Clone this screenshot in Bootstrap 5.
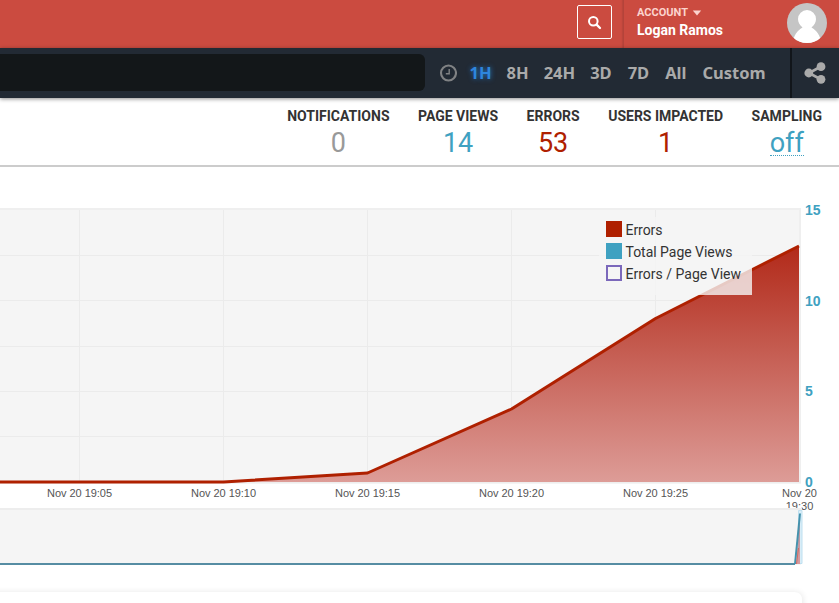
<!DOCTYPE html>
<html lang="en">
<head>
<meta charset="utf-8">
<title>Errors dashboard</title>
<meta name="viewport" content="width=device-width, initial-scale=1">
<link rel="stylesheet" href="https://cdn.jsdelivr.net/npm/bootstrap@5.3.0/dist/css/bootstrap.min.css">
<style>
body{font-family:Roboto,sans-serif;color:#333;background:#fff;overflow:hidden;height:603px}
.topbar{height:48px;background:#cb4b40;color:#fff}
.search-btn{width:35px;height:34px;border:1px solid #fff;border-radius:2px;margin:5px 11px 0 0;padding:0;color:#fff}
.account{width:216px;border-left:1px solid #b4433a;box-shadow:-1px 0 1px rgba(0,0,0,.08);padding:5px 12px 0 13px}
.account-title{font-size:11px;line-height:15px;font-weight:700;color:#fbd3cd}
.account-name{font-size:14px;line-height:20px;font-weight:700;letter-spacing:0}
.avatar{width:40px;height:40px;margin-top:-2px}
.toolbar{height:50px;background:#222a34;box-shadow:0 1px 4px rgba(0,0,0,.45);position:relative}
.filter-box{width:425px;height:37px;margin-top:6px;background:#131719;border-radius:0 6px 6px 0}
.ranges{margin-left:14px;font:700 16.5px/24px "Noto Sans",sans-serif;color:#aaa}
.ranges a{color:inherit;text-decoration:none;white-space:nowrap;margin-left:15px}
.ranges a.current{color:#2e86de;text-shadow:0 0 5px #2274c8;margin-left:12.5px}
.ranges a.spaced{margin-left:16px}
.share{width:49px;border-left:2px solid #11151a;padding-right:1px}
.stats{height:69px;padding:8px 17px 0 0;gap:28.5px;border-bottom:2px solid #ccc}
.stat-name{font-size:14px;line-height:20px;font-weight:700;white-space:nowrap}
.stat-num{font-size:27px;line-height:32px;padding-top:1px}
.c-gray{color:#999}.c-blue{color:#3fa1c1}.c-red{color:#af2000}
.off-link{border-bottom:1px dotted #3fa1c1;line-height:24px;display:inline-block}
.chart-area{height:436px}
.chart-area svg{display:block}
.axis-y{font:700 14px "Liberation Sans",Arial,sans-serif;fill:#3fa1c1}
.axis-x{font:11px "Liberation Sans",Arial,sans-serif;fill:#555;text-anchor:middle}
.key{font:14px Roboto,sans-serif;fill:#333}
</style>
</head>
<body>
<header class="topbar d-flex justify-content-end">
  <button class="btn search-btn d-flex align-items-center justify-content-center" aria-label="Search">
    <svg width="15" height="15" viewBox="0 0 15 15" fill="none" stroke="#fff"><circle cx="6.3" cy="6.3" r="4.3" stroke-width="2"/><path d="M9.6 9.6L13 13" stroke-width="2.3" stroke-linecap="round"/></svg>
  </button>
  <div class="account d-flex justify-content-between">
    <div>
      <div class="account-title d-flex align-items-center">ACCOUNT
        <svg class="ms-1" width="10" height="6" viewBox="0 0 10 6"><path d="M.8.5h8.4L5 5.500z" fill="#fbd3cd"/></svg></div>
      <div class="account-name">Logan Ramos</div>
    </div>
    <svg class="avatar" viewBox="0 0 40 40"><defs><clipPath id="face"><circle cx="20" cy="20" r="20"/></clipPath></defs><g clip-path="url(#face)"><path fill="#c5c5c5" d="M0 0h40v40H0z"/><path fill="#fff" d="M5.500 40C7 32 10 28 15.500 24.500 12.500 22 11 19 11 16a9 9 0 0 1 18 0c0 3-1.500 6-4.500 8.500C30 28 33 32 34.500 40z"/></g></svg>
  </div>
</header>
<nav class="toolbar d-flex">
  <div class="filter-box"></div>
  <div class="ranges d-flex align-items-center flex-grow-1">
    <svg width="18" height="18" viewBox="0 0 18 18" fill="none" stroke="#808284"><circle cx="9.500" cy="9" r="7.500" stroke-width="2.100"/><path d="M10.200 5v4.700H6.800" stroke-width="1.400"/></svg>
    <a class="current" href="#">1H</a>
    <a href="#">8H</a>
    <a href="#">24H</a>
    <a href="#">3D</a>
    <a class="spaced" href="#">7D</a>
    <a class="spaced" href="#">All</a>
    <a class="spaced" href="#">Custom</a>
  </div>
  <div class="share d-flex align-items-center justify-content-center">
    <svg width="22" height="22" viewBox="0 0 22 22" fill="#aaa"><path d="M17 4.500L5 11l12 6.500" fill="none" stroke="#aaa" stroke-width="2.600"/><circle cx="17" cy="4.700" r="4.400"/><circle cx="4.800" cy="11" r="4.400"/><circle cx="17" cy="17.300" r="4.400"/></svg>
  </div>
</nav>
<section class="stats d-flex justify-content-end text-center">
  <div><div class="stat-name">NOTIFICATIONS</div><div class="stat-num c-gray">0</div></div>
  <div><div class="stat-name">PAGE VIEWS</div><div class="stat-num c-blue">14</div></div>
  <div><div class="stat-name">ERRORS</div><div class="stat-num c-red">53</div></div>
  <div><div class="stat-name">USERS IMPACTED</div><div class="stat-num c-red">1</div></div>
  <div><div class="stat-name">SAMPLING</div><div class="stat-num c-blue"><span class="off-link">off</span></div></div>
</section>
<main class="chart-area">
<svg width="839" height="436" viewBox="0 167 839 436">
  <defs>
    <linearGradient id="fillRed" gradientUnits="userSpaceOnUse" x1="0" y1="209" x2="0" y2="482"><stop offset="0" stop-color="#af2000" stop-opacity="1"/><stop offset=".14" stop-color="#b22a1a"/><stop offset="1" stop-color="#dd9c97"/></linearGradient>
    <linearGradient id="fillMini" x1="0" y1="0" x2="0" y2="1"><stop offset="0" stop-color="#a99aaa"/><stop offset="1" stop-color="#d79b9f"/></linearGradient>
    <filter id="soft" x="-5%" y="-50%" width="110%" height="200%"><feGaussianBlur stdDeviation="3"/></filter>
  </defs>
  <path d="M0 208h801v275.500H0z" fill="#f5f5f5"/>
  <path d="M0 209h800v274" fill="none" stroke="#efefef" stroke-width="2"/>
  <path d="M0 482.500h801" stroke="#eee" stroke-width="2"/>
  <path d="M79.500 210v272M223.500 210v272M367.500 210v272M511.500 210v272M655.500 210v272M0 255.500h799M0 300.500h799M0 346.500h799M0 391.500h799M0 436.500h799" stroke="#ebebeb" stroke-width="1" fill="none"/>
  <path d="M0 482H223.500L367.500 473 511.500 409 655.500 318.500 799 246V482z" fill="url(#fillRed)"/>
  <path d="M0 482H223.500L367.500 473 511.500 409 655.500 318.500 799 246" fill="none" stroke="#af2000" stroke-width="3" stroke-linejoin="round"/>
  <path d="M599 217h153v78H599z" fill="#f5f5f5" fill-opacity=".8"/>
  <path d="M606 221h16v16h-16z" fill="#af2000"/>
  <path d="M606 243h16v16h-16z" fill="#3fa1c1"/>
  <path d="M607 266h14v14h-14z" fill="#f5f5f5" stroke="#7b68bb" stroke-width="2"/>
  <g class="key"><text x="625.500" y="235" textLength="37">Errors</text><text x="625.500" y="257" textLength="107">Total Page Views</text><text x="625.500" y="279" textLength="115.500">Errors / Page View</text></g>
  <g class="axis-y"><text x="805" y="215">15</text><text x="805" y="306">10</text><text x="805" y="396">5</text><text x="805" y="487">0</text></g>
  <g class="axis-x"><text x="79.500" y="497" textLength="65">Nov 20 19:05</text><text x="223.500" y="497" textLength="65">Nov 20 19:10</text><text x="367.500" y="497" textLength="65">Nov 20 19:15</text><text x="511.500" y="497" textLength="65">Nov 20 19:20</text><text x="655.500" y="497" textLength="65">Nov 20 19:25</text><text x="799.500" y="497">Nov 20</text><text x="799.500" y="510">19:30</text></g>
  <path d="M0 509h801v56H0z" fill="#f5f5f5"/>
  <path d="M0 509h802" stroke="#ededed" stroke-width="2"/>
  <path d="M798.500 510.500h3.500v53h-3.500z" fill="#d9edf7" stroke="#bfe0f0"/>
  <path d="M796 564l4-49v49z" fill="url(#fillMini)"/>
  <path d="M0 564H795" stroke="#568da3" stroke-width="2"/>
  <path d="M795 564L800 513.500" stroke="#4592ad" stroke-width="2"/>
  <path d="M796.500 564l2-16" stroke="#d56a60" stroke-width="1"/>
  <path d="M-20 592h815q8 0 8 8v20H-20z" fill="#000" opacity=".09" filter="url(#soft)"/>
  <path d="M-20 592h814q8 0 8 8v20H-20z" fill="#fff"/>
</svg>
</main>
<script src="https://cdn.jsdelivr.net/npm/bootstrap@5.3.0/dist/js/bootstrap.bundle.min.js"></script>
</body>
</html>
